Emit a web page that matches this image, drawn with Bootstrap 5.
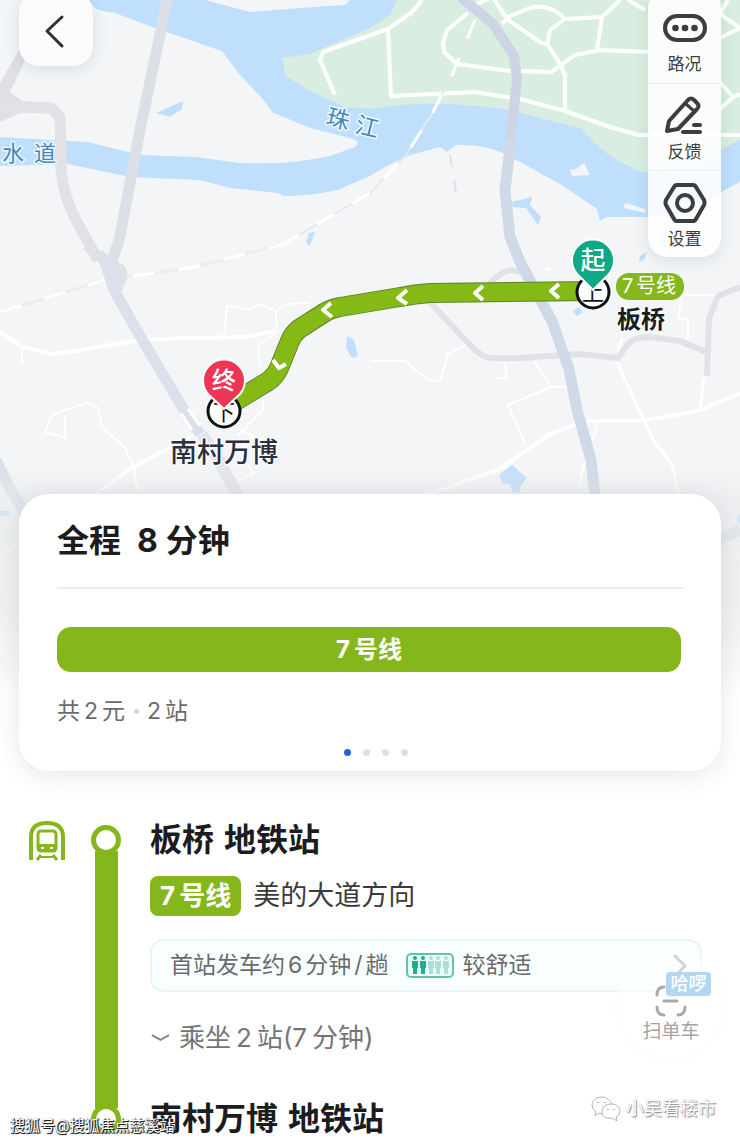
<!DOCTYPE html>
<html lang="zh-CN">
<head>
<meta charset="utf-8">
<meta name="viewport" content="width=device-width, initial-scale=1">
<title>全程 8分钟</title>
<link href="https://cdn.jsdelivr.net/npm/bootstrap@5.3.0/dist/css/bootstrap.min.css" rel="stylesheet">
<style>
  :root { --line: #85b71d; --ink: #1c1c1e; --soft: #6b6b6d; }
  body { font-family: Inter, "Noto Sans CJK SC", sans-serif; color: var(--ink); background: #fff; overflow-x: hidden; }
  .stage { display: grid; grid-template-columns: minmax(0, 1fr); }
  .stage > * { grid-area: 1 / 1; }
  .map-art { width: 100%; height: 720px; display: block; }
  .stage-ui { padding: 0 19px; z-index: 1; }
  .map-tools { height: 494px; }
  .back-btn { width: 74px; height: 74px; margin-top: -8px; padding: 4px 4px 0 0; border: 0; border-radius: 20px; background: #fbfbfc; box-shadow: 0 4px 16px rgba(60,70,80,.12); }
  .tool-panel { width: 73px; margin-top: -12px; padding-top: 8px; border-radius: 20px; background: rgba(255,255,255,.88); box-shadow: 0 4px 16px rgba(60,70,80,.12); }
  .tool-btn { border: 0; background: none; width: 100%; height: 87px; padding: 6px 0 2px; color: #3b3d40; font-size: 17px; line-height: 24px; }
  .tool-btn + .tool-btn { border-top: 1px solid #eaf0f0; }
  .tool-btn svg { display: block; margin: 0 auto 3px; }
  .trip-card { border: 0; border-radius: 30px; height: 277px; padding: 24px 38px 0; box-shadow: 0 4px 24px rgba(40,50,60,.12); }
  .trip-title { font-size: 32px; line-height: 46px; font-weight: 700; margin: 0; }
  .trip-rule { margin: 23px 0 38px; border-top: 2px solid #ededee; opacity: 1; }
  .line-bar { height: 45px; border-radius: 14px; background: var(--line); color: #fff; font-size: 24px; font-weight: 700; margin-right: 2px; }
  .fare { font-size: 23px; line-height: 36px; color: var(--soft); margin: 21px 0 0; }
  .fare-dot { width: 5px; height: 5px; border-radius: 50%; background: #d6d6d8; margin: 0 8px 0 9px; }
  .pager { gap: 12px; margin: 20px 0 0 11px; }
  .pager button { width: 7px; height: 7px; border: 0; padding: 0; border-radius: 50%; background: #e0e0e1; }
  .pager .is-on { background: #2264d9; }
  .steps { padding: 49px 38px 3px 28px; }
  .rail { width: 30px; margin: 5px 29px 5px 25px; }
  .rail-node { width: 30px; height: 30px; border: 5px solid var(--line); border-radius: 50%; background: #fff; flex: none; z-index: 1; }
  .rail-line { width: 23px; background: var(--line); margin: -4px 0; }
  .stop-name { font-size: 32px; line-height: 40px; font-weight: 700; margin: 0; gap: 10px; }
  .line-tag { background: var(--line); color: #fff; font-size: 26px; line-height: 40px; font-weight: 700; border-radius: 8px; padding: 0 10px; margin-right: 12px; }
  .direction { font-size: 27px; line-height: 40px; color: #3a3a3c; }
  .crowd { height: 53px; margin-top: 23px; padding: 0 12px 0 18px; border: 2px solid #e8f6f6; border-radius: 14px; background: #f9ffff; color: var(--soft); font-size: 23px; text-decoration: none; }
  .crowd-text { gap: 3px; }
  .ride { border: 0; background: none; padding: 0; margin: 28px 0 43px; font-size: 26px; line-height: 36px; color: #757577; gap: 5px; }
  .scan-btn { position: absolute; right: 15px; top: 178px; width: 108px; height: 108px; padding: 29px 0 7px; border: 0; border-radius: 50%; background: rgba(255,255,255,.5); box-shadow: 0 2px 10px rgba(0,0,0,.02); color: #a4a4a6; font-size: 19px; line-height: 26px; }
  .scan-flag { position: absolute; left: 49px; top: 23px; width: 45px; height: 24px; border-radius: 4px; background: #b3d7f3; color: #fff; font-size: 18px; line-height: 24px; font-weight: 500; }
  .mark-left { position: absolute; left: 10px; bottom: 5px; font-size: 15px; line-height: 22px; color: #fff; text-shadow: 1px 1px 0 #222, 1px 0 1px #333, 0 1px 1px #333; z-index: 2; }
  .mark-right { position: absolute; right: 24px; bottom: 20px; font-size: 18px; line-height: 26px; color: #fff; text-shadow: 1px 1px 1px #888, 0 0 1px #999; }
</style>
</head>
<body>
<main>
  <section class="stage">
    <svg class="map-art" viewBox="0 0 740 720" preserveAspectRatio="xMidYMin slice" role="img" aria-label="路线地图">
      <defs>
        <linearGradient id="fade" x1="0" y1="0" x2="0" y2="1">
          <stop offset="0" stop-color="#e7e9eb" stop-opacity="0"/>
          <stop offset=".12" stop-color="#e7e9eb" stop-opacity=".5"/>
          <stop offset=".55" stop-color="#eeefef" stop-opacity=".65"/>
          <stop offset=".9" stop-color="#fff"/>
          <stop offset="1" stop-color="#fff"/>
        </linearGradient>
      </defs>
      <rect width="740" height="720" fill="#f3f5f7"/>
      <!-- river and green island -->
      <path fill="#bfdffc" d="M86 0H205L250 12L300 8L345 5L350 0H740V182L721 192L690 217H607L600 221L597 209L560 184L520 162L505 154Q485 144 456 145L447 152L440 147L410 155L385 167L370 176L340 189Q320 195 284 196L278 193L230 188L200 180L130 177L68 164L0 166V137L88 142L140 155L195 157L240 163Q290 165 330 156L355 147Q362 142 350 138L310 128L272 112L262 98L240 75L222 51L155 28L115 13L98 10Z"/>
      <path fill="#d9eee0" d="M740 140L721 150L690 165L648 172L640 172L612 157L600 148L580 128L555 122L510 110Q450 101 400 105L370 109L345 107L310 91L286 76L282 58L310 54L330 45L370 28L390 15L397 0H740Z"/>
      <g fill="#f3f5f7"><path d="M570 170L576 169L584 163L590 175L572 176Z"/><path d="M625 203L645 209L646 213L624 208Z"/></g>
      <g fill="#bfdffc">
        <path d="M156 113L183 101L182 109L170 117Z"/><path d="M512 202L532 197L530 205L541 217L538 225L526 208L513 207Z"/>
        <path d="M347 336L354 340L358 356L352 358L346 348Z"/><path d="M499 475L512 465L527 478L521 485L519 493L512 492L510 484L503 484Z"/>
        <path d="M573 311L579 307L583 312L577 316Z"/><path d="M640 256L647 252L644 260L639 262Z"/><path d="M309 233L315 232L310 246L306 243Z"/><path d="M0 511H9V516H0Z"/><path d="M736 518L740 514V525Z"/>
      </g>
      <!-- streets on the island -->
      <g fill="none" stroke="#fff" stroke-width="4" stroke-linejoin="round">
        <path d="M335 95L320 60L323 52L388 29L391 96L475 92L520 99L565 111L610 127L638 135H740"/>
        <path d="M388 29L412 12L422 0M468 13L447 30L443 43L444 52L457 64L510 71L551 72L575 55L600 50L650 52"/>
        <path d="M475 5L490 -2M493 -2L508 20L540 42L548 45L560 64L565 75L565 110M502 24L510 16L530 8Q550 3 565 19L602 17L620 0M565 19L550 30L547 45M602 17L597 50"/>
        <path d="M628 0L645 10M720 14L740 28M720 38L740 28M720 82L733 97L740 94M733 97L720 109M720 14L728 0"/>
      </g>
      <!-- railways -->
      <g fill="none" stroke-width="3">
        <path stroke="#e6e7eb" stroke-width="2" d="M475 20L452 75L433 112L406 155L370 193L280 246"/>
        <path stroke="#fff" stroke-dasharray="20 21" d="M475 20L452 75L433 112L406 155L370 193L280 246"/>
        <path stroke="#eeecef" d="M0 312L105 280L190 268L290 243"/>
        <path stroke="#fff" stroke-dasharray="22 24" d="M0 312L105 280L190 268L290 243"/>
        <path stroke="#dfe1ea" stroke-width="2" stroke-dasharray="12 14" d="M450 155L456 192"/>
      </g>
      <!-- local streets -->
      <g fill="none" stroke="#fff" stroke-width="2" stroke-linejoin="round">
        <path stroke-width="4" d="M0 332L20 346L50 354L75 351L140 340L185 338L245 337L275 331"/>
        <path d="M22 348V364M224 337L227 306L248 309L262 304L276 312L285 304L310 303M276 312L277 332L258 345L260 366"/>
        <path stroke-width="4" d="M95 495L130 469L198 432"/>
        <path d="M135 469L125 448L102 427L98 408L88 403L75 407L52 415L45 432L65 438V415M135 469V482L140 495M238 435L263 410V395M240 430L255 437L238 450L254 474L238 480"/>
        <path d="M370 361H405L428 380L440 381L448 354L465 345M504 362L507 378H498M534 361L551 387L508 405L526 446M551 387H568"/>
        <path stroke-width="4" d="M425 495L500 469L550 434L585 421L640 421L698 411L740 393"/>
        <path stroke-width="3" d="M617 362L644 421L655 443L672 464L679 495M700 411L704 378M618 351L622 338"/>
        <path d="M597 422L593 440M586 459L578 488M681 293L679 319H688V340M675 295H715M545 270L551 268"/>
        <path d="M0 556L30 535M725 538L740 556M720 650L740 655"/>
      </g>
      <!-- main roads -->
      <g fill="none" stroke-linejoin="round">
        <g stroke="#e1e2e5" stroke-width="6">
          <path d="M428 300L470 345Q482 358 492 358L520 358L580 354L618 358L627 345Q634 337 650 337L680 341L706 352"/>
          <path d="M490 284Q500 271 512 270L524 273M740 287L718 296L709 319L707 376"/>
        </g>
        <path fill="#dfdfe7" d="M0 83L20 48L26 58L10 92L22 101L50 103V113H20L0 122Z"/>
        <path stroke="#e1e1e6" stroke-width="11" d="M0 107L52 108L60 118L61 170Q64 198 76 220L98 260"/>
        <path stroke="#dddfe7" stroke-width="11" d="M168 -4L140 130L119 241L110 265"/>
        <path fill="#dfe1e7" d="M82 248L103 251L117 262Q130 265 127 278L120 294L107 287L100 264Z"/>
        <path stroke="#dbe0ea" stroke-width="11" d="M108 255L114 290L140 336L187 415L200 434"/>
        <path stroke="#fff" stroke-width="3" d="M181 413L192 430M188 409L200 426"/>
        <path stroke="#e2e4e9" stroke-width="12" d="M202 434L218 459L240 500"/>
        <path stroke="#cdd4e5" stroke-width="10" d="M455 -8L493 24L514 56L517 80L510 145"/>
        <path stroke="#d0d9e8" stroke-width="11" d="M511 140L505 190L510 237L521 264L552 321L569 369L577 410L591 460L595 495"/>
        <path stroke="#dbe1ea" stroke-width="11" d="M-4 460L8 485L26 515M0 660L22 690M718 540L740 530"/>
      </g>
      <rect y="465" width="740" height="255" fill="url(#fade)"/>
      <g fill="#4388b8" stroke="#edf7ff" stroke-width="3" paint-order="stroke" font-size="22">
        <text x="2" y="161">水</text><text x="34" y="161">道</text>
        <text x="325" y="124" font-size="23" transform="rotate(14 325 124)">珠</text><text x="354" y="132" font-size="23" transform="rotate(14 354 132)">江</text>
      </g>
      <!-- metro route -->
      <g fill="none" stroke-linejoin="round">
        <path stroke="#5f812b" stroke-width="20" d="M234 402L267 382Q275 377 279 368L290 341Q293 334 299 329L324 313Q330 309 340 307L400 297Q415 294 430 293L592 291"/>
        <path stroke="#84b916" stroke-width="18" d="M234 402L267 382Q275 377 279 368L290 341Q293 334 299 329L324 313Q330 309 340 307L400 297Q415 294 430 293L592 291"/>
        <g stroke="#fff" stroke-width="4">
          <path d="M559 284L551 291L559 298M483 286L475 293L483 300M407 290L398 298L407 304M331 303L323 310L332 317M273 360L279 368L286 364"/>
        </g>
      </g>
      <g text-anchor="middle">
        <circle cx="593" cy="292" r="16" fill="#fff" stroke="#111" stroke-width="3"/>
        <text x="593" y="300" font-size="22" fill="#111">上</text>
        <circle cx="224" cy="411" r="16" fill="#fff" stroke="#111" stroke-width="3"/>
        <text x="224" y="420" font-size="22" fill="#111">下</text>
        <path fill="#0fa886" stroke="#fff" stroke-width="2" d="M593 290L577 274A21 21 0 1 1 609 274Z"/>
        <text x="593" y="269" font-size="25" font-weight="500" fill="#fff">起</text>
        <path fill="#ee3654" stroke="#fff" stroke-width="2" d="M224 409L208 394A21 21 0 1 1 240 394Z"/>
        <text x="224" y="389" font-size="24" font-weight="500" fill="#fff">终</text>
      </g>
      <g stroke="#f8fafb" stroke-width="3" paint-order="stroke">
        <rect x="616" y="273" width="68" height="27" rx="13" fill="#86b81b" stroke-width="1"/>
        <text x="622" y="293" font-size="20" fill="#fff" stroke="none">7</text>
        <text x="636" y="293" font-size="20" fill="#fff" stroke="none">号线</text>
        <text x="617" y="328" font-size="24" font-weight="700" fill="#1c1c1e">板桥</text>
        <text x="170" y="462" font-size="27" font-weight="500" fill="#2c2f3c">南村万博</text>
      </g>
    </svg>

    <div class="stage-ui">
      <div class="map-tools d-flex justify-content-between align-items-start">
        <button class="back-btn" type="button" aria-label="返回">
          <svg width="24" height="36" viewBox="0 0 24 36" fill="none" stroke="#303133" stroke-width="3" stroke-linecap="round" stroke-linejoin="round"><path d="M20 4L5 18L20 33"/></svg>
        </button>
        <div class="tool-panel">
          <button class="tool-btn" type="button">
            <svg width="44" height="42" viewBox="0 0 44 42" fill="none" stroke="currentColor" stroke-width="4"><rect x="2" y="9" width="40" height="24" rx="12"/><g fill="currentColor" stroke="none"><circle cx="12.500" cy="21" r="3.300"/><circle cx="22" cy="21" r="3.300"/><circle cx="31.500" cy="21" r="3.300"/></g></svg>
            路况
          </button>
          <button class="tool-btn" type="button">
            <svg width="44" height="42" viewBox="0 0 44 42" fill="none" stroke="currentColor" stroke-width="4" stroke-linecap="round" stroke-linejoin="round"><path d="M4 36L6 26L25 5Q28 2 31 5L34 8Q37 11 34 14L15 34Z"/><path stroke-width="3" d="M23 9L31 16"/><path d="M20 37H37M31 30H37"/></svg>
            反馈
          </button>
          <button class="tool-btn" type="button">
            <svg width="44" height="42" viewBox="0 0 44 42" fill="none" stroke="currentColor" stroke-width="4" stroke-linejoin="round"><path d="M14 3H30Q32 3 33 5L41 18Q42 21 41 23L33 37Q32 39 30 39H14Q12 39 11 37L3 23Q2 21 3 18L11 5Q12 3 14 3Z"/><circle cx="22" cy="21" r="8"/></svg>
            设置
          </button>
        </div>
      </div>

      <div class="card trip-card">
        <h1 class="trip-title d-flex"><span class="me-3">全程</span><span class="me-2">8</span><span>分钟</span></h1>
        <hr class="trip-rule">
        <div class="line-bar d-flex align-items-center justify-content-center gap-1"><span>7</span><span>号线</span></div>
        <p class="fare d-flex align-items-center"><span>共</span><span class="mx-1">2</span><span>元</span><span class="fare-dot"></span><span class="me-1">2</span><span>站</span></p>
        <div class="pager d-flex justify-content-center">
          <button class="is-on" type="button" aria-label="方案 1"></button><button type="button" aria-label="方案 2"></button><button type="button" aria-label="方案 3"></button><button type="button" aria-label="方案 4"></button>
        </div>
      </div>
    </div>
  </section>

  <section class="steps position-relative d-flex">
    <svg class="flex-shrink-0" width="38" height="42" viewBox="0 0 38 42" fill="none" stroke="#85b71d" stroke-width="4" aria-label="地铁" role="img">
      <path d="M3 40V17Q3 3 19 3T35 17V40"/>
      <rect x="10" y="11" width="18" height="20" rx="3" stroke-width="3"/>
      <path fill="#85b71d" stroke="none" d="M10 24H28V32H10Z"/><path stroke="#fff" stroke-width="2" d="M13 28H16M22 28H25"/>
      <path stroke-width="3" d="M13 35L9 40M25 35L29 40"/><path stroke-width="2" d="M13 37H25"/>
    </svg>
    <div class="rail flex-shrink-0 d-flex flex-column align-items-center">
      <span class="rail-node"></span><span class="rail-line flex-grow-1"></span><span class="rail-node"></span>
    </div>
    <div class="flex-grow-1">
      <h2 class="stop-name d-flex"><span>板桥</span><span>地铁站</span></h2>
      <div class="d-flex mt-3">
        <span class="line-tag d-flex gap-1"><span>7</span><span>号线</span></span>
        <span class="direction">美的大道方向</span>
      </div>
      <a class="crowd d-flex align-items-center" href="#crowd">
        <span class="crowd-text d-flex"><span>首站发车约</span><span>6</span><span>分钟</span><span>/</span><span>趟</span></span>
        <svg class="mx-2 ms-3" width="50" height="28" viewBox="0 0 50 28">
          <rect x="2" y="2" width="46" height="23" rx="4" fill="#effcf9" stroke="#5fc4ae" stroke-width="2"/>
          <defs><g id="person"><circle cx="0" cy="6" r="2"/><path d="M-3 9H3V16H2V22H-2V16H-3Z"/></g></defs>
          <g fill="#21ab8b"><use href="#person" x="10"/><use href="#person" x="18"/></g>
          <g fill="#addfd5"><use href="#person" x="26"/><use href="#person" x="33"/><use href="#person" x="41"/></g>
        </svg>
        <span>较舒适</span>
        <svg class="ms-auto" width="16" height="26" viewBox="0 0 16 26" fill="none" stroke="#a3abac" stroke-width="3"><path d="M2 2L13 13L2 24"/></svg>
      </a>
      <button class="ride d-flex align-items-center" type="button">
        <svg class="me-1" width="20" height="10" viewBox="0 0 21 10" fill="none" stroke="#858587" stroke-width="2"><path d="M2 2L11 7L20 2"/></svg>
        <span>乘坐</span><span>2</span><span>站(7</span><span>分钟)</span>
      </button>
      <h2 class="stop-name d-flex"><span>南村万博</span><span>地铁站</span></h2>
    </div>

    <button class="scan-btn" type="button">
      <svg class="d-block mx-auto" width="32" height="36" viewBox="0 0 32 36" fill="none" stroke="#a9a9aa" stroke-width="3" stroke-linecap="round"><path d="M9 4Q2 4 2 12M2 24Q2 32 9 32M23 32Q30 32 30 24M9 18H22"/></svg>
      扫单车
      <span class="scan-flag">哈啰</span>
    </button>
    <span class="mark-left">搜狐号@搜狐焦点慈溪站</span>
    <span class="mark-right d-flex align-items-center">
      <svg class="me-1" width="31" height="26" viewBox="0 0 31 26" fill="#fff" stroke="#b5b5b5" stroke-width="1"><path d="M11 1C5 1 1 5 1 9Q1 13 5 16L4 20L8 17L13 18C19 17 22 13 21 9S16 1 11 1Z"/><path d="M20 8C15 8 11 11 11 16S16 23 21 22L26 25L25 21Q30 19 29 15C29 11 25 8 20 8Z"/><path d="M7 6V7M14 6V7M17 13V14M23 13V14" stroke-width="2"/></svg>
      小吴看楼市
    </span>
  </section>
</main>
<script src="https://cdn.jsdelivr.net/npm/bootstrap@5.3.0/dist/js/bootstrap.bundle.min.js"></script>
</body>
</html>
